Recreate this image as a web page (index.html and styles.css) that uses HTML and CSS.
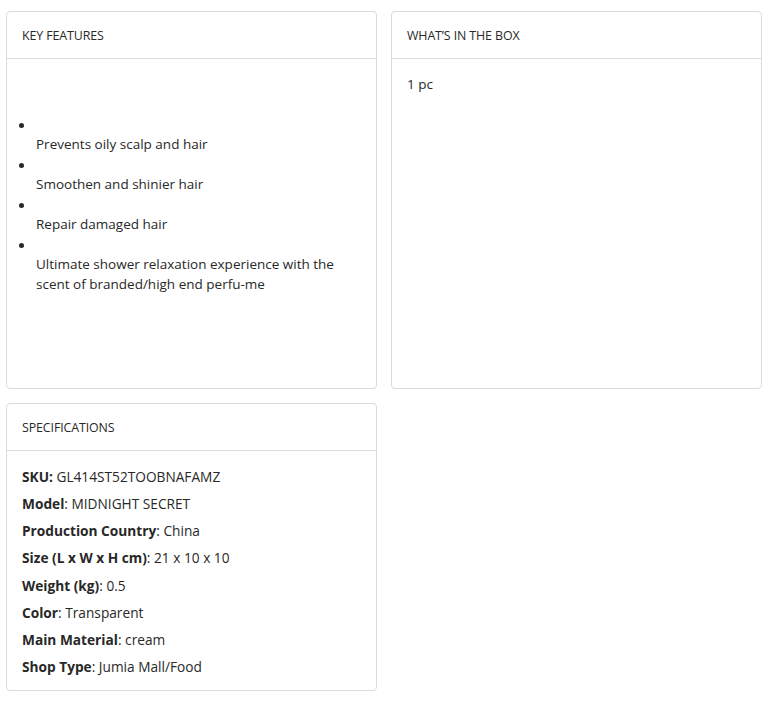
FILE: index.html
```html
<!DOCTYPE html>
<html lang="en">
<head>
<meta charset="utf-8">
<title>Product details</title>
<link rel="stylesheet" href="styles.css">
</head>
<body>
<div class="grid">
  <section class="card">
    <h2 class="card-head">KEY FEATURES</h2>
    <div class="card-body features">
      <ul class="feat-list">
        <li><span class="dot"></span><span class="feat-text">Prevents oily scalp and hair</span></li>
        <li><span class="dot"></span><span class="feat-text">Smoothen and shinier hair</span></li>
        <li><span class="dot"></span><span class="feat-text">Repair damaged hair</span></li>
        <li><span class="dot"></span><span class="feat-text">Ultimate shower relaxation experience with the scent of branded/high end perfu-me</span></li>
      </ul>
    </div>
  </section>
  <section class="card">
    <h2 class="card-head">WHAT’S IN THE BOX</h2>
    <div class="card-body box">
      <p class="plain">1 pc</p>
    </div>
  </section>
  <section class="card">
    <h2 class="card-head">SPECIFICATIONS</h2>
    <div class="card-body specs">
      <p class="spec"><b>SKU:</b> GL414ST52TOOBNAFAMZ</p>
      <p class="spec"><b>Model</b>: MIDNIGHT SECRET</p>
      <p class="spec"><b>Production Country</b>: China</p>
      <p class="spec"><b>Size (L x W x H cm)</b>: 21 x 10 x 10</p>
      <p class="spec"><b>Weight (kg)</b>: 0.5</p>
      <p class="spec"><b>Color</b>: Transparent</p>
      <p class="spec"><b>Main Material</b>: cream</p>
      <p class="spec"><b>Shop Type</b>: Jumia Mall/Food</p>
    </div>
  </section>
</div>
</body>
</html>
```
FILE: styles.css
```css
* { box-sizing: border-box; }
html, body { background: #fff; }
body {
  margin: 0;
  padding: 11px 10px 14px 6px;
  font-family: "Open Sans", "Noto Sans", sans-serif;
  font-size: 13.5px;
  line-height: 20px;
  color: #282828;
}
.grid {
  display: grid;
  grid-template-columns: 371px 371px;
  column-gap: 14px;
  row-gap: 14px;
}
.card {
  border: 1px solid #dcdcdc;
  border-radius: 4px;
  background: #fff;
}
.card-head {
  margin: 0;
  height: 47px;
  padding: 14px 15px 0;
  font-size: 12.4px;
  font-weight: 400;
  line-height: 20px;
  border-bottom: 1px solid #dcdcdc;
  letter-spacing: -0.1px;
}
.card-body {
  padding: 16px 15px;
}
.box { padding-top: 15px; }
.features {
  padding-top: 55px;
  padding-bottom: 94px;
}
.feat-list {
  list-style: none;
  margin: 0;
  padding: 0;
}
.feat-list li {
  display: flex;
  flex-direction: column;
}
.dot {
  display: block;
  height: 20px;
  position: relative;
}
.dot::before {
  content: "";
  position: absolute;
  left: -3px;
  top: 9px;
  width: 5px;
  height: 5px;
  border-radius: 50%;
  background: #282828;
}
.feat-text {
  display: block;
  padding-left: 14px;
  padding-right: 10px;
}
.plain { margin: 0; }
.specs { padding-bottom: 13px; }
.spec {
  margin: 0 0 7.15px;
  font-size: 13.7px;
}
.spec:last-child { margin-bottom: 0; }
.spec b { font-weight: 700; }
```
